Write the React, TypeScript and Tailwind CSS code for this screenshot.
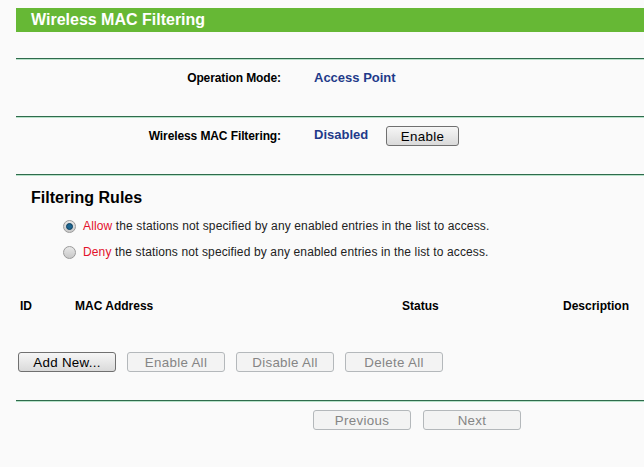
const font = { fontFamily: '"Liberation Sans", Arial, sans-serif' }

function Divider() {
  return <div className="h-[2px] border-t border-[#2f6b4c] border-b border-b-[#b7e2c9]" />
}

function Btn({ label, width, disabled }: { label: string; width: string; disabled?: boolean }) {
  return (
    <button
      disabled={disabled}
      className={
        disabled
          ? `${width} h-[20px] pt-[2px] rounded-[3px] border border-[#b4b8bb] bg-[#f3f3f3] text-[13.33px] tracking-[0.3px] leading-none text-[#858585]`
          : `${width} h-[20px] pt-[2px] rounded-[3px] border border-[#707070] bg-gradient-to-b from-[#f6f6f6] to-[#dadada] text-[13.33px] tracking-[0.3px] leading-none text-black`
      }
    >
      {label}
    </button>
  )
}

function Radio({ checked }: { checked?: boolean }) {
  return (
    <span className="w-[13px] h-[13px] rounded-full border border-[#9a9a9a] bg-gradient-to-b from-[#e8e8e8] to-[#c8c8c8] flex items-center justify-center">
      {checked && (
        <span className="w-[7px] h-[7px] rounded-full bg-[#1d6590] border border-[#0e3f5f]" />
      )}
    </span>
  )
}

export default function App() {
  return (
    <div className="w-[644px] h-[467px] bg-[#fafafa] pl-[16px] pt-[8px] overflow-hidden" style={font}>
      <div className="h-[24px] bg-[#66b835] pl-[15px] flex items-center">
        <span className="text-white font-bold text-[16px]">Wireless MAC Filtering</span>
      </div>

      <div className="h-[26px]" />
      <Divider />

      <div className="h-[56px] pt-[10px]">
        <div className="flex items-center h-[16px]">
          <div className="w-[265px] text-right text-[12px] tracking-[-0.1px] font-bold text-black">Operation Mode:</div>
          <div className="ml-[33px] text-[13px] font-bold text-[#1f3a8a]">Access Point</div>
        </div>
      </div>
      <Divider />

      <div className="h-[56px] pt-[8px]">
        <div className="flex items-center h-[20px]">
          <div className="w-[265px] text-right text-[12px] tracking-[-0.1px] font-bold text-black -mt-[1px]">Wireless MAC Filtering:</div>
          <div className="ml-[33px] w-[72px] text-[13px] font-bold text-[#1f3a8a] -mt-[2px]">Disabled</div>
          <Btn label="Enable" width="w-[73px]" />
        </div>
      </div>
      <Divider />

      <div className="h-[224px] pt-[12px]">
        <div className="ml-[15px] h-[20px] text-[16px] font-bold text-black leading-[20px]">Filtering Rules</div>

        <div className="mt-[10px] ml-[47px] h-[16px] flex items-center gap-[7px] text-[12px] tracking-[0.13px] text-[#222]">
          <Radio checked />
          <span>
            <span className="text-[#e3112b]">Allow</span> the stations not specified by any enabled entries in the list to access.
          </span>
        </div>
        <div className="mt-[10px] ml-[47px] h-[16px] flex items-center gap-[7px] text-[12px] tracking-[0.13px] text-[#222]">
          <Radio />
          <span>
            <span className="text-[#e3112b]">Deny</span> the stations not specified by any enabled entries in the list to access.
          </span>
        </div>

        <div className="mt-[38px] h-[16px] pl-[4px] flex items-center text-[12px] font-bold text-black">
          <div className="w-[55px]">ID</div>
          <div className="w-[327px]">MAC Address</div>
          <div className="w-[161px]">Status</div>
          <div>Description</div>
        </div>

        <div className="mt-[38px] ml-[2px] flex gap-[11px]">
          <Btn label="Add New..." width="w-[98px]" />
          <Btn label="Enable All" width="w-[98px]" disabled />
          <Btn label="Disable All" width="w-[98px]" disabled />
          <Btn label="Delete All" width="w-[98px]" disabled />
        </div>
      </div>
      <Divider />

      <div className="mt-[8px] ml-[297px] flex gap-[12px]">
        <Btn label="Previous" width="w-[98px]" disabled />
        <Btn label="Next" width="w-[98px]" disabled />
      </div>
    </div>
  )
}
